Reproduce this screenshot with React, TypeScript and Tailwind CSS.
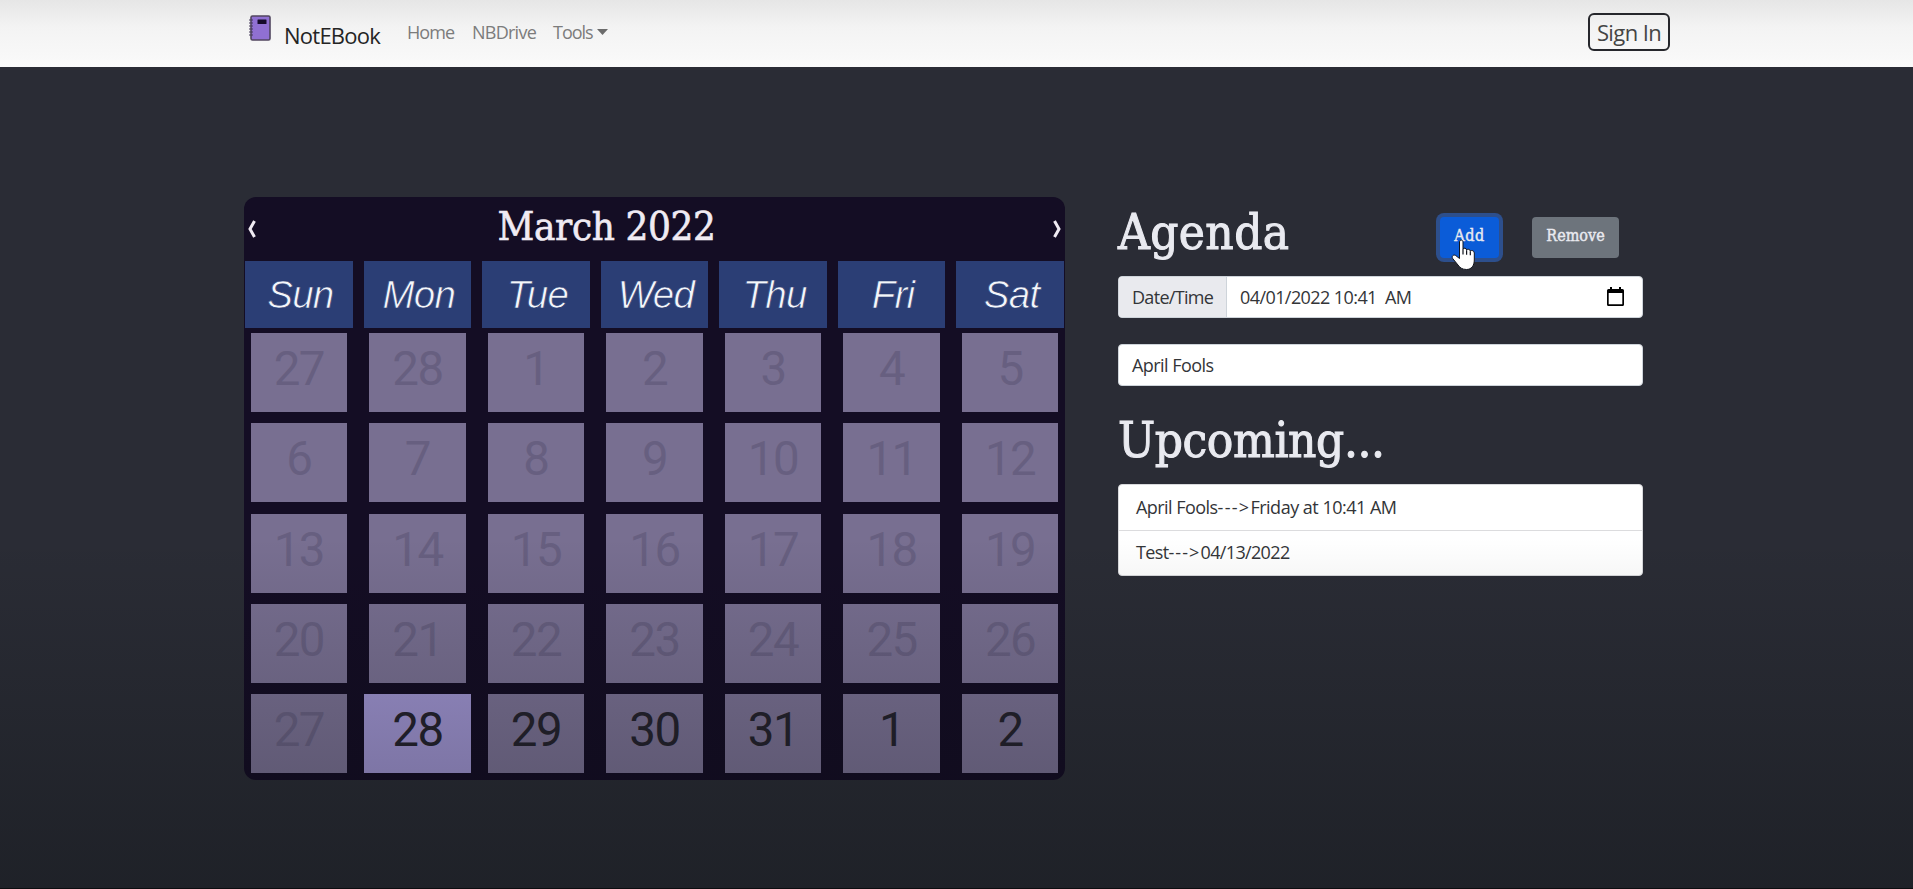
const DAYS = ['Sun', 'Mon', 'Tue', 'Wed', 'Thu', 'Fri', 'Sat'];
const DATES = [
  27, 28, 1, 2, 3, 4, 5, 6, 7, 8, 9, 10, 11, 12, 13, 14, 15, 16, 17, 18, 19, 20, 21, 22, 23, 24, 25, 26, 27, 28, 29,
  30, 31, 1, 2,
];
const TODAY = 29;
const SERIF = "font-['DejaVu_Serif_Condensed','DejaVu_Serif',serif]";

function NotebookIcon() {
  return (
    <svg className="h-[26px] w-[22px]" viewBox="0 0 22 26" fill="none">
      <rect x="2" y="1" width="19" height="24" rx="1.5" fill="#9070d2" stroke="#51465f" strokeWidth="1.6" />
      <rect x="8.5" y="4.5" width="9" height="4.5" rx="0.5" fill="#150b2a" />
      <path d="M0 5h4M0 8h4M0 11h4M0 14h4M0 17h4M0 20h4" stroke="#463a5c" strokeWidth="1.2" />
    </svg>
  );
}

function HandCursor() {
  return (
    <svg className="absolute left-[11px] top-[22px] h-[32px] w-[26px]" viewBox="0 0 26 32">
      <path
        d="M8.500 3C8.500.500 12 .500 12 3V10C12.800 8.600 15.400 8.900 15.600 11C16.700 9.700 19.100 10.200 19.300 12C20.700 11 23.300 11.600 23.300 14V21C23.300 26.500 20.500 30.500 15.500 30.500C11 30.500 8.800 28.500 7 26L1.700 19.500C.200 17.200 2.500 15.200 4.700 16.500L8.500 19.500z"
        fill="#fff"
        stroke="#10131c"
        strokeWidth="1"
      />
      <path d="M12 10v5.500M15.600 11.200v4.500M19.300 12.200v4" stroke="#10131c" strokeWidth="1.2" />
    </svg>
  );
}

function CalendarIcon() {
  return (
    <svg className="h-[19px] w-[17px]" viewBox="0 0 17 19" preserveAspectRatio="none">
      <path d="M3 0h2v2h7V0h2v2h1.500A1.500 1.500 0 0 1 17 3.500v14a1.500 1.500 0 0 1-1.500 1.500h-14A1.500 1.500 0 0 1 0 17.500v-14A1.500 1.500 0 0 1 1.500 2H3zM1.700 6v11.300h13.600V6z" fill="#000" />
    </svg>
  );
}

function Navbar() {
  return (
    <nav className="flex h-[67px] items-start bg-linear-to-b from-[#e6e6e6] via-[#f3f3f3] via-40% to-[#fafafa] pl-[249px] pr-[243px] text-[#7c7c7c]">
      <div className="pt-[15px]">
        <NotebookIcon />
      </div>
      <span className="ml-[13px] w-[123px] pt-[18px] text-[22px] leading-[34px] tracking-[-0.75px] text-[#242424]">NotEBook</span>
      <span className="w-[65px] pt-[17px] text-[18px] leading-[30px] tracking-[-0.9px]">Home</span>
      <span className="w-[81px] pt-[17px] text-[18px] leading-[30px] tracking-[-0.75px]">NBDrive</span>
      <span className="flex pt-[17px] text-[18px] leading-[30px] tracking-[-1px]">
        Tools
        <svg className="ml-[4px] mt-[12px] h-[6px] w-[11px]" viewBox="0 0 11 6">
          <path d="M0 0h11L5.500 6z" fill="#6b6b6b" />
        </svg>
      </span>
      <button className="ml-auto mt-[13px] h-[38px] w-[82px] rounded-md border-2 border-[#26272c] text-[22px] leading-[33px] tracking-[-0.6px] text-[#444444]">
        Sign In
      </button>
    </nav>
  );
}

function Chevron({ d }: { d: string }) {
  return (
    <svg className="mt-[23px] h-[18px] w-[9px]" viewBox="0 0 9 18" fill="none">
      <path d={d} stroke="#f0ebf3" strokeWidth="3" />
    </svg>
  );
}

function Calendar() {
  return (
    <section className="h-[583px] w-[821px] rounded-xl bg-[#140d24] px-px">
      <header className={`flex h-[64px] justify-between px-[2px] text-[#f0ebf3] ${SERIF}`}>
        <Chevron d="M7.500 1L3 9L7.500 17" />
        <h1 className="ml-[-96px] pt-[4px] text-[40px] leading-[50px] tracking-[-0.4px] [-webkit-text-stroke:0.6px_#f0ebf3]">March 2022</h1>
        <Chevron d="M1.500 1L6 9L1.500 17" />
      </header>
      <div className="grid grid-cols-7 gap-x-[10.8px]">
        {DAYS.map((day) => (
          <div key={day} className="h-[67px] bg-[#2b3e75] pl-[3px] text-center font-['Liberation_Sans',sans-serif] text-[38.5px] italic leading-[68px] tracking-[-0.7px] text-[#f4f6fb] [-webkit-text-stroke:0.7px_#2b3e75]">
            {day}
          </div>
        ))}
      </div>
      <div className="mt-[5px] grid grid-cols-7 gap-x-[10.8px] gap-y-[11.25px] font-[Roboto,sans-serif] text-[47.5px] leading-[72px] tracking-[-1.5px]">
        {DATES.map((date, i) => (
          <div
            key={i}
            className={
              i === TODAY
                ? 'h-[79px] bg-[#9c91cd] text-center text-[#24222d]'
                : i > TODAY
                  ? 'mx-[5.6px] h-[79px] bg-[#786f91] text-center text-[#24222d]'
                  : 'mx-[5.6px] h-[79px] bg-[#786f91] text-center text-[#675f80]'
            }
          >
            {date}
          </div>
        ))}
      </div>
    </section>
  );
}

function Agenda() {
  return (
    <section className="w-[525px] text-[18px] tracking-[-0.65px] text-[#333538]">
      <div className={`flex h-[79px] text-[#e9eaf0] ${SERIF}`}>
        <h2 className="w-[322px] pt-[3px] text-[49px] leading-[66px] tracking-[0.4px] [-webkit-text-stroke:1px_#e9eaf0]">Agenda</h2>
        <button className="relative mt-[20px] h-[41px] w-[59px] rounded-[4px] bg-[#0b5cd8] pb-[4px] text-[16px] tracking-[0.5px] ring-4 ring-[#2d4f8c] [-webkit-text-stroke:0.4px_#e9eaf0]">
          Add
          <HandCursor />
        </button>
        <button className="ml-[33px] mt-[20px] h-[41px] w-[87px] rounded-[4px] bg-[#6d747c] pb-[4px] text-[16px] tracking-[0px] [-webkit-text-stroke:0.4px_#e9eaf0]">
          Remove
        </button>
      </div>
      <div className="flex h-[42px] overflow-hidden rounded-[4px] border border-[#ced4da] bg-white leading-[41px]">
        <span className="w-[108px] border-r border-[#ced4da] bg-[#e9eaee] pl-[13px] tracking-[-0.7px]">Date/Time</span>
        <span className="pl-[13px] tracking-[-0.58px]">04/01/2022 10:41&nbsp; AM</span>
        <span className="ml-auto pr-[18px] pt-[10px]">
          <CalendarIcon />
        </span>
      </div>
      <div className="mt-[26px] h-[42px] rounded-[4px] border border-[#ced4da] bg-white pl-[13px] leading-[41px] tracking-[-0.55px]">April Fools</div>
      <h2 className={`h-[98px] pt-[22px] text-[49px] leading-[66px] tracking-[-0.4px] text-[#e9eaf0] [-webkit-text-stroke:1px_#e9eaf0] ${SERIF}`}>
        Upcoming...
      </h2>
      <ul className="h-[92px] rounded-[4px] border border-[#d8d9dc] bg-white">
        <li className="h-[46px] border-b border-[#dcdcde] pl-[17px] leading-[45px]">
          <span className="tracking-[-0.55px]">April Fools</span>
          <span className="tracking-[1.3px]">---&gt;</span>
          <span className="tracking-[-0.5px]">Friday at 10:41 AM</span>
        </li>
        <li className="pl-[17px] leading-[43px]">
          Test<span className="tracking-[1.1px]">---&gt;</span>04/13/2022
        </li>
      </ul>
    </section>
  );
}

export default function App() {
  return (
    <div className="relative flex h-[889px] w-[1913px] flex-col overflow-hidden border-b border-[#0c0d10] bg-[#2a2c35] font-['Open_Sans',sans-serif]">
      <Navbar />
      <main className="flex items-start gap-[53px] pl-[244px] pt-[130px]">
        <Calendar />
        <Agenda />
      </main>
      <div className="pointer-events-none absolute inset-x-0 bottom-0 h-[350px] bg-linear-to-b from-transparent to-[#05090a]/30" />
    </div>
  );
}
